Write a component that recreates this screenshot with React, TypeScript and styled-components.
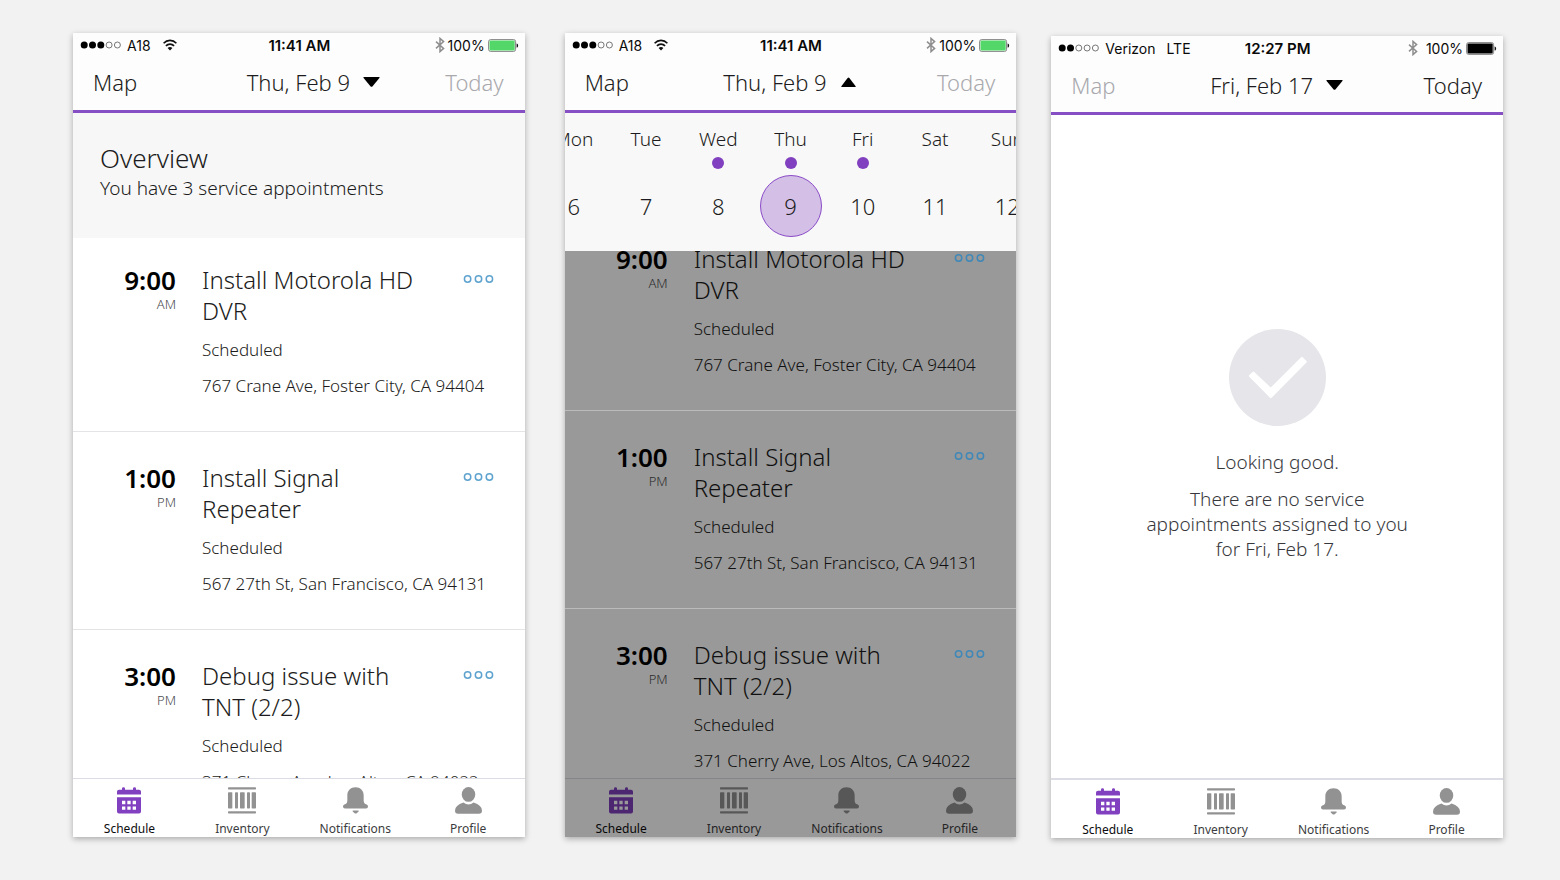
import React from "react";
import styled, { createGlobalStyle, css } from "styled-components";

const GlobalStyle = createGlobalStyle`
  *, *::before, *::after { box-sizing: border-box; }
  body {
    margin: 0;
    background: #f2f2f2;
    color: #1c1c20;
    font-family: "Noto Sans", "Open Sans", sans-serif;
    font-weight: 300;
  }
  button {
    margin: 0;
    padding: 0;
    border: 0;
    background: none;
    color: inherit;
    font: inherit;
    cursor: pointer;
  }
  h2, h3, p, ul { margin: 0; padding: 0; font-weight: inherit; list-style: none; }
  svg { display: block; }
`;

const Page = styled.main`
  display: flex;
  align-items: flex-start;
  gap: 35px;
  min-height: 100vh;
  padding: 33px 57px 0 73px;
`;

const Phone = styled.section<{ $drop?: number; $after?: number; $trim?: number }>`
  display: flex;
  flex: 1 1 0;
  flex-direction: column;
  min-width: 0;
  height: calc(100vh - ${(p) => 76 + (p.$trim ?? 0)}px);
  margin-top: ${(p) => p.$drop ?? 0}px;
  margin-right: ${(p) => p.$after ?? 0}px;
  background: #fff;
  box-shadow: 0 2px 6px rgba(0, 0, 0, 0.3);
  overflow: hidden;
`;

const Header = styled.header`
  flex: none;
  background: #fdfdfd;
  border-bottom: 3px solid #8650c4;
`;

const StatusBar = styled.div`
  display: grid;
  grid-template-columns: 1fr auto 1fr;
  align-items: center;
  height: 24px;
  padding: 0 6px 0 7px;
  color: #0a0a0a;
  font-family: Inter, "Liberation Sans", sans-serif;
  font-size: 14px;
  font-weight: 400;
`;

const StatusLeft = styled.div<{ $gap: number }>`
  display: flex;
  align-items: center;
  gap: ${(p) => p.$gap}px;
`;

const Carrier = styled.span`
  display: flex;
  align-items: center;
  gap: 5px;
`;

const StatusRight = styled.div<{ $gap: number }>`
  display: flex;
  align-items: center;
  justify-content: flex-end;
  gap: 3px;

  svg:first-child { margin-right: ${(p) => p.$gap}px; }
`;

const Clock = styled.strong`
  font-size: 15px;
  font-weight: 600;
`;

const NavBar = styled.nav<{ $height: number }>`
  display: grid;
  grid-template-columns: 1fr auto 1fr;
  align-items: center;
  height: ${(p) => p.$height}px;
  padding: 0 21px 3px 20px;
  font-size: 22px;
  line-height: 30px;
`;

const NavButton = styled.button<{ $end?: boolean }>`
  justify-self: ${(p) => (p.$end ? "end" : "start")};

  &:disabled { color: #a9a9ad; cursor: default; }
`;

const DateButton = styled.button<{ $lead?: number }>`
  display: flex;
  align-items: center;
  gap: 13px;
  padding-left: ${(p) => p.$lead ?? 0}px;
`;

const Body = styled.div`
  position: relative;
  display: flex;
  flex: 1;
  flex-direction: column;
  min-height: 0;
`;

const Scrim = styled.div`
  position: absolute;
  inset: 0;
  background: rgba(0, 0, 0, 0.4);
`;

const Overview = styled.div`
  flex: none;
  height: 125px;
  padding: 28px 27px;
  background: #f7f7f8;

  h2 { font-size: 26px; line-height: 34px; }
  p { font-size: 19px; line-height: 26px; }
`;

const Scroller = styled.div`
  flex: 1;
  min-height: 0;
  overflow: hidden;
`;

const MoreButton = styled.button`
  align-self: start;
  padding: 10px 0;
  color: #5ea3cf;
`;

const Appointment = styled.li`
  display: grid;
  grid-template-columns: 103px 1fr auto;
  height: 198px;
  padding: 30px 31px 0 0;
  border-bottom: 1px solid #e4e4e6;

  &:first-child { height: 194px; padding-top: 26px; }
`;

const Appointments = styled.ul<{ $scrolled?: number; $dimmed?: boolean }>`
  margin-top: ${(p) => -(p.$scrolled ?? 0)}px;

  ${(p) =>
    p.$dimmed &&
    css`
      ${Appointment} {
        position: relative;
        border-bottom-color: transparent;
      }
      ${Appointment}::after {
        content: "";
        position: absolute;
        z-index: 1;
        inset: auto 0 -1px;
        height: 1px;
        background: #bbb;
      }
      ${MoreButton} {
        position: relative;
        z-index: 1;
        color: #3f88b8;
      }
    `}
`;

const Time = styled.div`
  text-align: right;
  font-size: 13px;
  line-height: 16px;
  color: #4a4a4d;

  strong {
    display: block;
    color: #000;
    font-size: 26px;
    font-weight: 600;
    line-height: 32px;
  }
`;

const Details = styled.div`
  padding-left: 26px;
  font-size: 17px;
  line-height: 36px;
  white-space: nowrap;

  h3 {
    margin-bottom: 6px;
    font-size: 24px;
    line-height: 31px;
  }
  p { width: 0; }
`;

const WeekStrip = styled.div`
  display: grid;
  grid-template-columns: repeat(7, 16%);
  justify-content: center;
  flex: none;
  height: 138px;
  overflow: hidden;
  background: #f8f8f8;
`;

const Day = styled.button`
  display: flex;
  flex-direction: column;
  align-items: center;
  justify-content: flex-start;
  padding-top: 13px;
  font-size: 19px;
  line-height: 26px;
`;

const DayDot = styled.span<{ $on?: boolean }>`
  width: 12px;
  height: 12px;
  margin: 5px 0 6px;
  border-radius: 50%;
  background: ${(p) => (p.$on ? "#8040bf" : "transparent")};
`;

const DayNumber = styled.span<{ $selected?: boolean }>`
  display: flex;
  align-items: center;
  justify-content: center;
  width: 62px;
  height: 62px;
  border: 1px solid ${(p) => (p.$selected ? "#8a4cc8" : "transparent")};
  border-radius: 50%;
  background: ${(p) => (p.$selected ? "#d4bfe6" : "transparent")};
  font-size: 22px;
`;

const Empty = styled.div`
  display: flex;
  flex: 1;
  flex-direction: column;
  align-items: center;
  padding-top: 214px;
  color: #38383c;
  text-align: center;
  font-size: 19px;
  line-height: 25px;

  svg { margin-bottom: 24px; }
  p { margin-bottom: 12px; }
`;

const TabBar = styled.nav<{ $line: number }>`
  display: grid;
  grid-template-columns: repeat(4, 1fr);
  flex: none;
  height: ${(p) => 58 + p.$line}px;
  border-top: ${(p) => p.$line}px solid #dcdde4;
  background: #fff;
`;

const Tab = styled.button<{ $active?: boolean }>`
  display: flex;
  flex-direction: column;
  align-items: center;
  gap: 6px;
  padding-top: 8px;
  color: ${(p) => (p.$active ? "#0c0c0e" : "#3c3c40")};
  font-size: 12px;
  font-weight: 400;
  line-height: 17px;

  svg { color: ${(p) => (p.$active ? "#8040bf" : "#929292")}; }
`;

const SignalDots = ({ level }: { level: number }) => (
  <svg width="42" height="8" viewBox="0 0 42 8" aria-label="Signal">
    {[0, 1, 2, 3, 4].map((i) =>
      i < level ? (
        <circle key={i} cx={4.2 + i * 8.3} cy="4" r="3.5" fill="#000" />
      ) : (
        <circle key={i} cx={4.2 + i * 8.3} cy="4" r="3" fill="none" stroke="#555" strokeWidth="0.8" />
      )
    )}
  </svg>
);

const Wifi = () => (
  <svg width="14" height="12" viewBox="0 0 14 12" fill="none" stroke="#111" strokeWidth="1.6" aria-label="Wi-Fi">
    <path d="M0.6 4.2C4.2 0.4 9.800 0.4 13.4 4.2" />
    <path d="M2.900 6.9C5.2 4.5 8.800 4.5 11.1 6.9" />
    <path d="M7 11.500 4.6 9C6 7.800 8 7.800 9.4 9Z" fill="#111" stroke="none" />
  </svg>
);

const Bluetooth = () => (
  <svg width="10" height="16" viewBox="0 0 10 16" fill="none" stroke="#8e8e8e" strokeWidth="1.5" aria-label="Bluetooth">
    <path d="M1 4.6 8.6 11.4 5 14.6V1.400L8.6 4.6 1 11.4" />
  </svg>
);

const Battery = ({ fill }: { fill: string }) => (
  <svg width="31" height="13" viewBox="0 0 31 13" aria-label="Battery">
    <rect x="0.6" y="0.6" width="27" height="11.8" rx="2" fill="#fff" stroke="#777" strokeWidth="0.9" />
    <rect x="1.5" y="1.5" width="25.2" height="10" rx="1" fill={fill} />
    <path d="M28.6 4.4C30.6 4.6 30.6 8.4 28.6 8.6Z" fill="#111" />
  </svg>
);

const Caret = ({ up }: { up?: boolean }) => (
  <svg width="17" height="10" viewBox="0 0 17 10" fill="#000" aria-hidden="true">
    <path d={up ? "M1.2 9.6 7.6 1.1Q8.5 0 9.4 1.1L15.8 9.6Q15.8 10 15.3 10H1.7Q1.2 10 1.2 9.6Z" : "M0.9 0H16.1Q17 0.3 16.4 1.1L9.4 9.4Q8.5 10.3 7.6 9.4L0.6 1.1Q0 0.3 0.9 0Z"} />
  </svg>
);

const MoreDots = () => (
  <svg width="31" height="10" viewBox="0 0 31 10" fill="none" stroke="currentColor" strokeWidth="1.5" aria-hidden="true">
    <circle cx="4.6" cy="5" r="3.2" />
    <circle cx="15.5" cy="5" r="3.2" />
    <circle cx="26.4" cy="5" r="3.2" />
  </svg>
);

const CalendarIcon = () => (
  <svg width="24" height="27" viewBox="0 0 72 80" fill="currentColor" fillRule="evenodd" aria-hidden="true">
    <path d="M0 22V14Q0 8 6 8H15V4Q15 0 19.500 0T24 4V8H48V4Q48 0 52.500 0T57 4V8H66Q72 8 72 14V22Z" />
    <path d="M0 30H72V73Q72 79 66 79H6Q0 79 0 73ZM15 41V51H25V41ZM31 41V51H41V41ZM47 41V51H57V41ZM15 58V68H25V58ZM31 58V68H41V58ZM47 58V68H57V58Z" />
  </svg>
);

const BarcodeIcon = () => (
  <svg width="28" height="27" viewBox="0 0 84 80" fill="currentColor" aria-hidden="true">
    <rect width="84" height="7" rx="2" />
    <rect y="72" width="84" height="7" rx="2" />
    <rect y="15" width="13" height="49" rx="2" />
    <rect x="21" y="15" width="9" height="49" rx="2" />
    <rect x="36" y="15" width="14" height="49" rx="2" />
    <rect x="57" y="15" width="9" height="49" rx="2" />
    <rect x="71" y="15" width="13" height="49" rx="2" />
  </svg>
);

const BellIcon = () => (
  <svg width="25" height="27" viewBox="0 0 75 80" fill="currentColor" aria-hidden="true">
    <path d="M37.500 0C52 0 62 10 62 24V40Q62 50 71 52Q75 54 75 58Q75 64 69 64H6Q0 64 0 58Q0 54 4 52Q13 50 13 40V24C13 10 23 0 37.500 0Z" />
    <path d="M30 70H46Q49 71 46 74L41 78Q38 80 35 78L30 74Q27 71 30 70Z" />
  </svg>
);

const PersonIcon = () => (
  <svg width="27" height="27" viewBox="0 0 80 80" fill="currentColor" aria-hidden="true">
    <ellipse cx="40" cy="22" rx="20" ry="22" />
    <path d="M25 46Q40 57 55 46Q80 54 80 70Q80 79 71 79H9Q0 79 0 70Q0 54 25 46Z" />
  </svg>
);

const CheckBadge = () => (
  <svg width="97" height="97" viewBox="0 0 290 290" aria-hidden="true">
    <circle cx="145" cy="145" r="145" fill="#e5e5ea" />
    <path d="M63 140 73 131 125 180 218 87 229 98 125 203Z" fill="#fff" stroke="#fff" strokeWidth="7" strokeLinejoin="round" />
  </svg>
);

const tabs = [
  { label: "Schedule", Icon: CalendarIcon },
  { label: "Inventory", Icon: BarcodeIcon },
  { label: "Notifications", Icon: BellIcon },
  { label: "Profile", Icon: PersonIcon },
];

const Tabs = ({ line = 1 }: { line?: number }) => (
  <TabBar $line={line} aria-label="Sections">
    {tabs.map(({ label, Icon }, i) => (
      <Tab key={label} type="button" $active={i === 0}>
        <Icon />
        {label}
      </Tab>
    ))}
  </TabBar>
);

const appointments = [
  { time: "9:00", half: "AM", title: ["Install Motorola HD", "DVR"], address: "767 Crane Ave, Foster City, CA 94404" },
  { time: "1:00", half: "PM", title: ["Install Signal", "Repeater"], address: "567 27th St, San Francisco, CA 94131" },
  { time: "3:00", half: "PM", title: ["Debug issue with", "TNT (2/2)"], address: "371 Cherry Ave, Los Altos, CA 94022" },
];

const AppointmentList = ({ scrolled, dimmed }: { scrolled?: number; dimmed?: boolean }) => (
  <Scroller>
    <Appointments $scrolled={scrolled} $dimmed={dimmed}>
      {appointments.map((a) => (
        <Appointment key={a.time}>
          <Time>
            <strong>{a.time}</strong>
            {a.half}
          </Time>
          <Details>
            <h3>
              {a.title[0]}
              <br />
              {a.title[1]}
            </h3>
            <p>Scheduled</p>
            <p>{a.address}</p>
          </Details>
          <MoreButton type="button" aria-label="More actions">
            <MoreDots />
          </MoreButton>
        </Appointment>
      ))}
    </Appointments>
  </Scroller>
);

const week = [
  { name: "Mon", date: 6 },
  { name: "Tue", date: 7 },
  { name: "Wed", date: 8, busy: true },
  { name: "Thu", date: 9, busy: true, selected: true },
  { name: "Fri", date: 10, busy: true },
  { name: "Sat", date: 11 },
  { name: "Sun", date: 12 },
];

type TopProps = {
  carrier: string;
  network: React.ReactNode;
  signal: number;
  clock: string;
  battery: string;
  date: string;
  open?: boolean;
  mapOff?: boolean;
  todayOff?: boolean;
  lead?: number;
  navHeight?: number;
  spread?: number;
};

const Top = (p: TopProps) => (
  <Header>
    <StatusBar>
      <StatusLeft $gap={p.spread ? 11 : 12}>
        <Carrier>
          <SignalDots level={p.signal} />
          {p.carrier}
        </Carrier>
        {p.network}
      </StatusLeft>
      <Clock>{p.clock}</Clock>
      <StatusRight $gap={p.spread ?? 0}>
        <Bluetooth />
        100%
        <Battery fill={p.battery} />
      </StatusRight>
    </StatusBar>
    <NavBar $height={p.navHeight ?? 53}>
      <NavButton type="button" disabled={p.mapOff}>Map</NavButton>
      <DateButton type="button" $lead={p.lead} aria-expanded={!!p.open}>
        {p.date}
        <Caret up={p.open} />
      </DateButton>
      <NavButton type="button" $end disabled={p.todayOff}>Today</NavButton>
    </NavBar>
  </Header>
);

export default function App() {
  return (
    <>
      <GlobalStyle />
      <Page>
        <Phone $after={5}>
          <Top carrier="A18" network={<Wifi />} signal={3} clock="11:41 AM" battery="#53d769" date="Thu, Feb 9" todayOff lead={30} />
          <Overview>
            <h2>Overview</h2>
            <p>You have 3 service appointments</p>
          </Overview>
          <AppointmentList />
          <Tabs />
        </Phone>

        <Phone>
          <Top carrier="A18" network={<Wifi />} signal={3} clock="11:41 AM" battery="#53d769" date="Thu, Feb 9" open todayOff />
          <WeekStrip>
            {week.map((d) => (
              <Day key={d.name} type="button">
                {d.name}
                <DayDot $on={d.busy} />
                <DayNumber $selected={d.selected}>{d.date}</DayNumber>
              </Day>
            ))}
          </WeekStrip>
          <Body>
            <AppointmentList scrolled={34} dimmed />
            <Tabs />
            <Scrim />
          </Body>
        </Phone>

        <Phone $drop={3} $trim={2}>
          <Top carrier="Verizon" network="LTE" signal={2} clock="12:27 PM" battery="#000" date="Fri, Feb 17" mapOff navHeight={52} spread={5} />
          <Empty>
            <CheckBadge />
            <p>Looking good.</p>
            <p>
              There are no service
              <br />
              appointments assigned to you
              <br />
              for Fri, Feb 17.
            </p>
          </Empty>
          <Tabs line={2} />
        </Phone>
      </Page>
    </>
  );
}
